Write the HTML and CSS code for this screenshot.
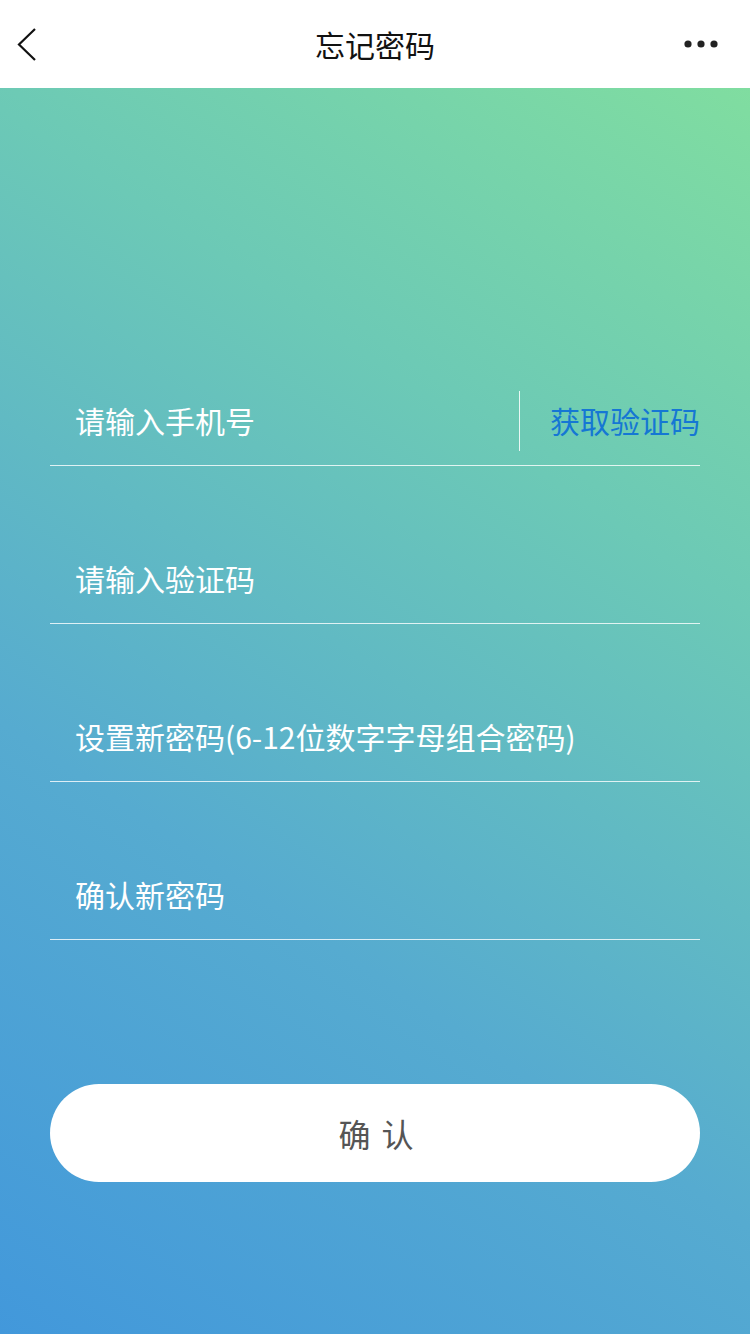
FILE: index.html
```html
<!DOCTYPE html>
<html lang="zh-CN">
<head>
<meta charset="utf-8">
<title>忘记密码</title>
<link rel="stylesheet" href="styles.css">
</head>
<body>
<div class="page">
  <header class="nav">
    <svg class="back" width="24" height="36" viewBox="0 0 24 36"><path d="M19 2 L3 17.5 L19 33" fill="none" stroke="#111" stroke-width="2.2"/></svg>
    <h1 class="title">忘记密码</h1>
    <svg class="more" width="36" height="10" viewBox="0 0 36 10"><circle cx="4" cy="5" r="3.6" fill="#222"/><circle cx="17" cy="5" r="3.6" fill="#222"/><circle cx="30" cy="5" r="3.6" fill="#222"/></svg>
  </header>
  <main class="main">
    <form class="form">
      <div class="row">
        <input class="field" type="tel" placeholder="请输入手机号">
        <span class="divider"></span>
        <span class="code-btn">获取验证码</span>
      </div>
      <div class="row">
        <input class="field" type="text" placeholder="请输入验证码">
      </div>
      <div class="row">
        <input class="field" type="password" placeholder="设置新密码(6-12位数字字母组合密码)">
      </div>
      <div class="row">
        <input class="field" type="password" placeholder="确认新密码">
      </div>
    </form>
    <button class="submit" type="button">确 认</button>
  </main>
</div>
</body>
</html>
```
FILE: styles.css
```css
* { box-sizing: border-box; }
html, body { margin: 0; padding: 0; }
body {
  font-family: "Noto Sans CJK SC", "Noto Sans", sans-serif;
  width: 750px;
  height: 1334px;
  overflow: hidden;
}
.page {
  display: flex;
  flex-direction: column;
  height: 1334px;
}
.nav {
  height: 88px;
  background: #fff;
  display: grid;
  grid-template-columns: 1fr auto 1fr;
  align-items: center;
  padding: 0 16px;
  flex: none;
}
.back { display: block; margin-top: 2px; justify-self: start; }
.title {
  margin: 0;
  font-size: 30px;
  font-weight: 400;
  color: #111;
  line-height: 1;
}
.more { display: block; justify-self: end; margin-right: 14px; }
.main {
  flex: 1;
  background: linear-gradient(34deg, #4298db 0%, #56abd0 35%, #6cc9b6 70%, #80dda0 100%);
  padding: 220px 50px 0;
  display: flex;
  flex-direction: column;
}
.form { display: flex; flex-direction: column; }
.row {
  height: 158px;
  border-bottom: 1px solid rgba(255,255,255,0.8);
  display: flex;
  align-items: flex-end;
  padding-bottom: 24px;
}
.field {
  flex: 1;
  min-width: 0;
  border: 0;
  background: transparent;
  outline: none;
  font-family: inherit;
  font-size: 30px;
  color: #fff;
  padding: 0 0 0 25px;
  height: 42px;
  line-height: 42px;
}
.field::placeholder { color: #fff; opacity: 1; }
.divider {
  width: 1px;
  height: 60px;
  background: rgba(255,255,255,0.85);
  margin: 0 30px -10px 0;
}
.code-btn {
  font-size: 30px;
  color: #1577d4;
  line-height: 42px;
  white-space: nowrap;
}
.submit {
  margin-top: 144px;
  height: 98px;
  border: 0;
  border-radius: 49px;
  background: #fff;
  font-family: inherit;
  font-size: 32px;
  color: #555;
  letter-spacing: 2px;
  padding: 0 0 0 4px;
}
```
